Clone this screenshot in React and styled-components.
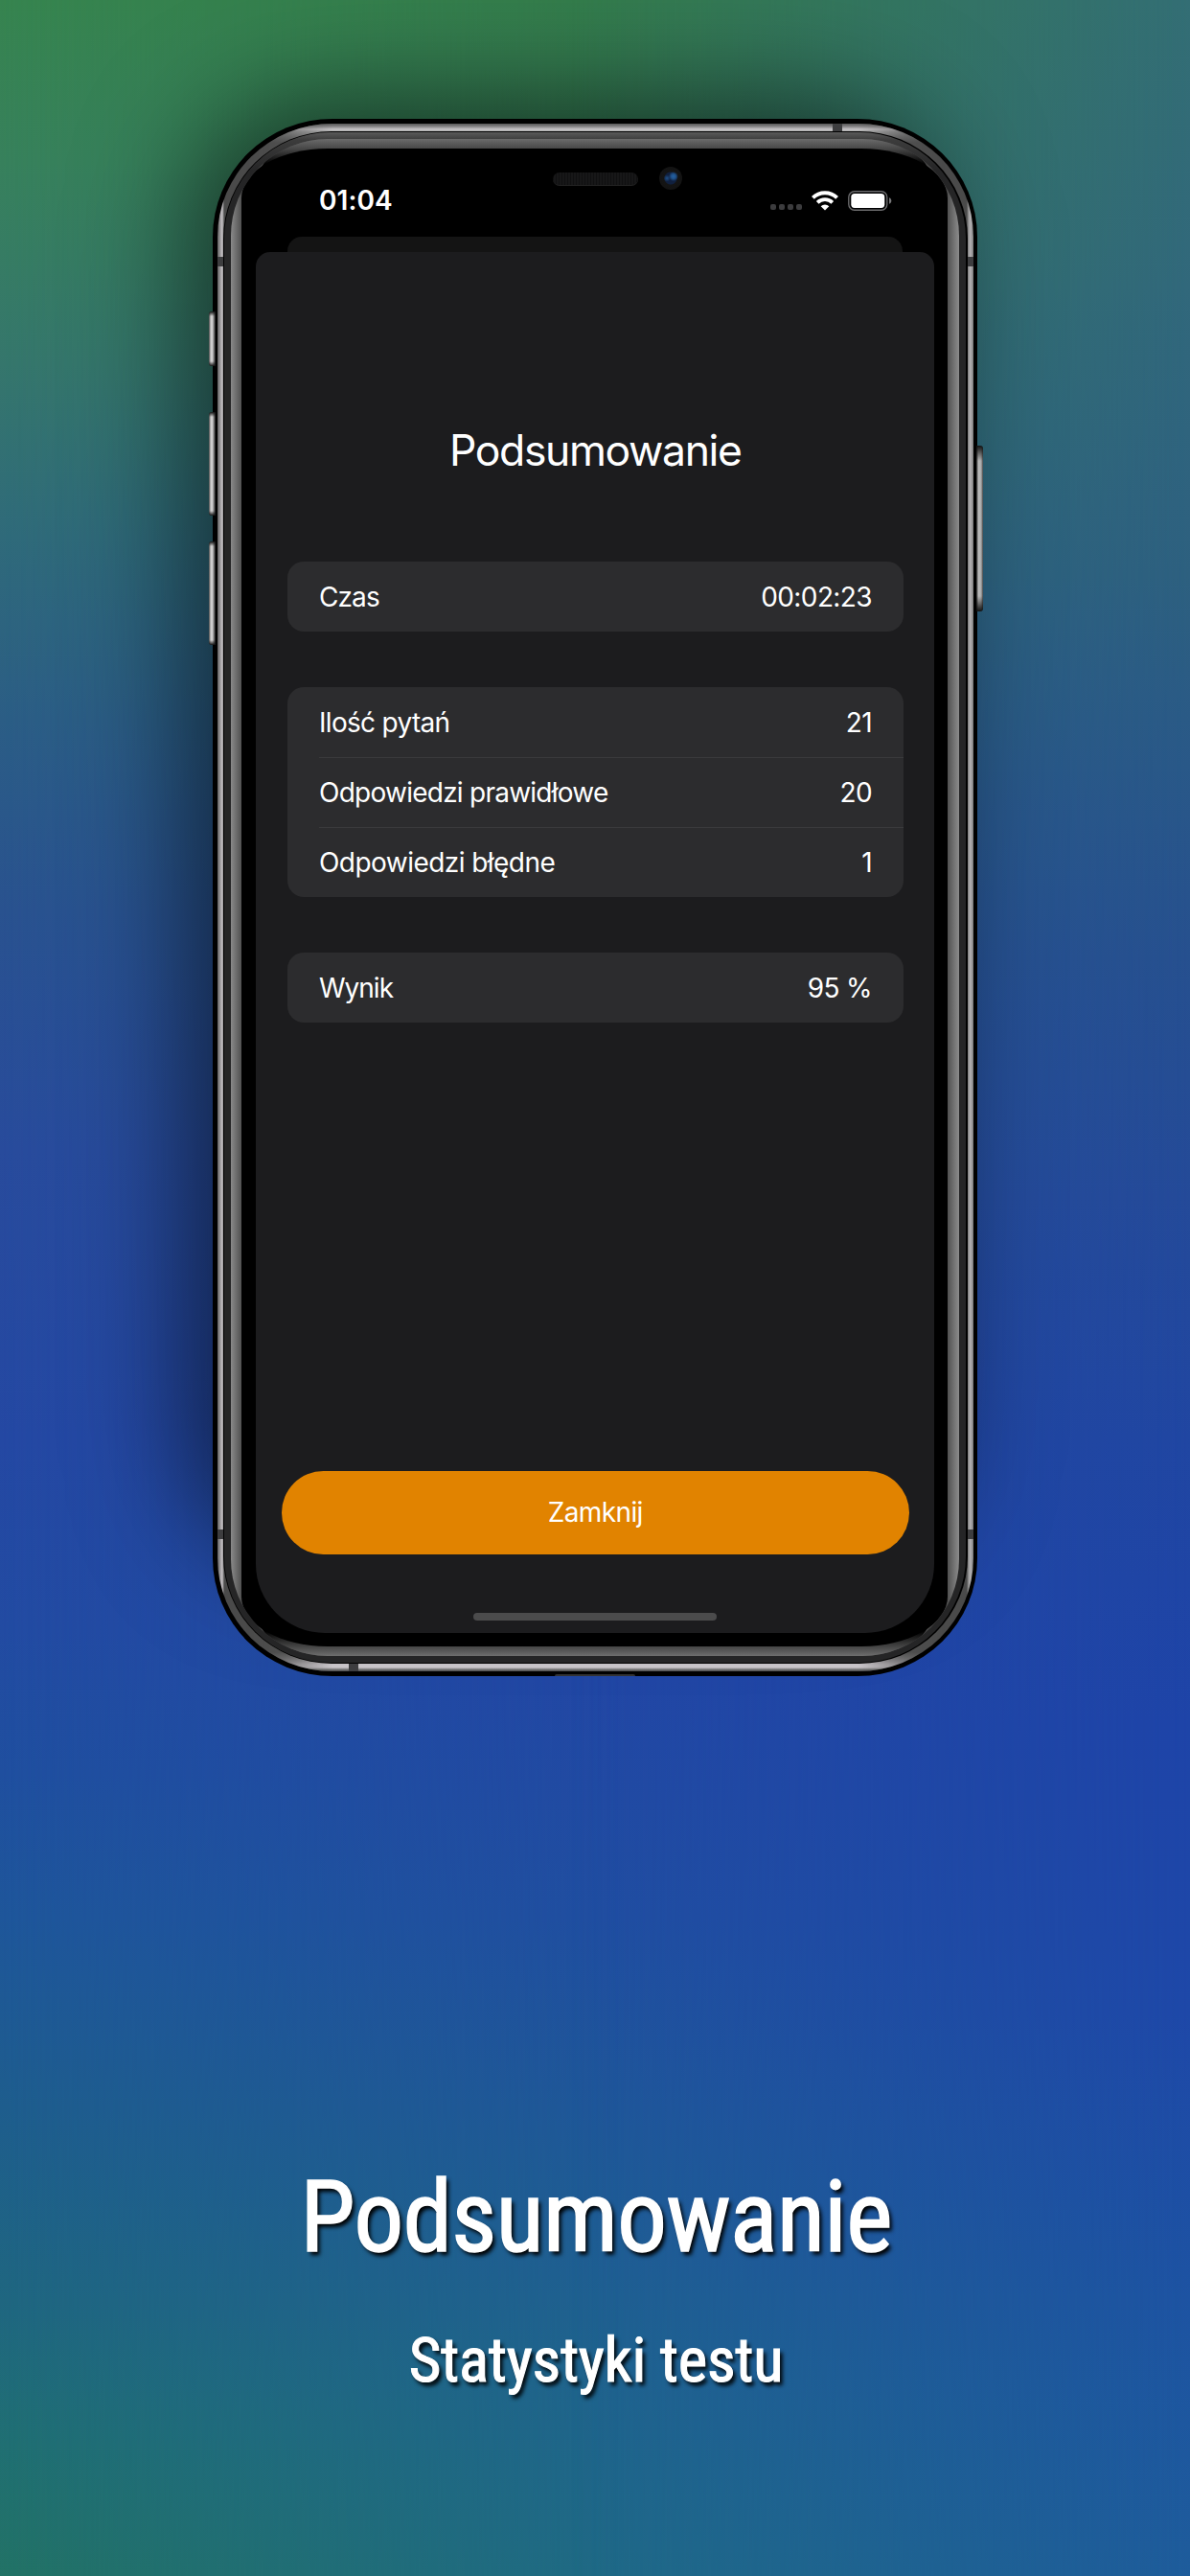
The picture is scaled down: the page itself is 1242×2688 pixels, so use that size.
import React from "react";
import styled, { createGlobalStyle } from "styled-components";

const GlobalStyle = createGlobalStyle`
  html, body { margin: 0; padding: 0; }
  *, *::before, *::after { box-sizing: border-box; }
`;

const Poster = styled.main`
  position: relative;
  isolation: isolate;
  display: flex;
  flex-direction: column;
  align-items: center;
  width: 1242px;
  height: 2688px;
  padding-top: 124px;
  overflow: hidden;
  color: #fff;
  font-family: Inter, "Liberation Sans", sans-serif;
  background: linear-gradient(
    180deg,
    #347d4c 0px, #35795a 250px, #31706c 450px, #2c627c 650px, #28568a 850px,
    #264e96 1100px, #2448a0 1400px, #2247a5 1750px, #204ea1 2000px,
    #1f5799 2200px, #1f6190 2420px, #1f6a86 2688px
  );
`;

const SideWash = styled.div`
  position: absolute;
  z-index: -2;
  inset: 0;
  background: ${(p) => p.$tones};
  mask-image: linear-gradient(${(p) => p.$to}, #000 0%, transparent 52%);
`;

const leftTones =
  "linear-gradient(180deg, #36844f 0px, #37815c 170px, #35766c 380px, #2f6a7a 560px, #2b5d85 750px, #29528f 950px, #284b9c 1200px, #2448a3 1500px, #224ba2 1700px, #1f4f9f 1850px, #1e569a 2000px, #1e5d8d 2200px, #1f6680 2400px, #206f72 2550px, #227265 2688px)";
const rightTones =
  "linear-gradient(180deg, #336e74 0px, #31687b 300px, #2d6080 600px, #295888 800px, #26508f 1000px, #244a99 1250px, #2046a2 1500px, #1e44a8 1800px, #1e48a8 2100px, #1d53a2 2400px, #1e5c9b 2688px)";

const PhoneWrap = styled.section`
  position: relative;
  width: 798px;
  height: 1625px;
  margin-right: 1px;
  &::before {
    content: "";
    position: absolute;
    z-index: -1;
    left: 5px;
    right: 45px;
    top: 5px;
    bottom: 130px;
    border-radius: 120px;
    box-shadow: -14px -6px 115px 18px rgba(0, 0, 0, 0.56);
  }
`;

const SideKey = styled.i`
  position: absolute;
  width: 7px;
  top: ${(p) => p.$top}px;
  height: ${(p) => p.$height}px;
  ${(p) => (p.$right ? "right: -6px;" : "left: -4px;")}
  border-radius: ${(p) => (p.$right ? "0 3px 3px 0" : "3px 0 0 3px")};
  background:
    linear-gradient(180deg, #111 0, transparent ${(p) => (p.$right ? 16 : 5)}px, transparent calc(100% - ${(p) => (p.$right ? 16 : 5)}px), #111 100%),
    ${(p) =>
      p.$right
        ? "linear-gradient(90deg, #111 0, #777 1px, #bbb 2.5px, #aaa 5px, #444 7px)"
        : "linear-gradient(90deg, #444 0, #aaa 1.5px, #e0e0e0 3px, #bbb 4px, #555 6px, #000 7px)"};
`;

const Shell = styled.div`
  height: 100%;
  padding: 4.5px 4px 5px 5px;
  border-radius: 125px / 123px;
  background: #000;
`;

const MetalBand = styled.div`
  position: relative;
  height: 100%;
  padding: 8px 6px;
  border-radius: 120px / 118px;
  overflow: hidden;
  background: linear-gradient(90deg, #5c5c5c 0, #8b898b 2px, #c6c2c6 5px, #4a4a4a 7px, #4a4a4a calc(100% - 7px), #999 calc(100% - 5px), #b4b2b4 calc(100% - 3px), #777 100%);
  &::before {
    content: "";
    position: absolute;
    inset: 0;
    background: linear-gradient(180deg, #555 0, #858385 3px, #c8c5c8 6px, #aaa 8px, #555 20px, #555 calc(100% - 20px), #c8c4c8 calc(100% - 7px), #c8c4c8 calc(100% - 4px), #777 calc(100% - 2px), #4a4a4a 100%);
    mask-image: linear-gradient(90deg, transparent 30px, #000 120px, #000 calc(100% - 120px), transparent calc(100% - 30px));
  }
`;

const Antenna = styled.i`
  position: absolute;
  background: #3d3d3f;
  width: ${(p) => (p.$flat ? 10 : 6)}px;
  height: ${(p) => (p.$flat ? 8 : 10)}px;
  ${(p) => p.$side}: 0;
  ${(p) => (p.$flat ? "left" : "top")}: ${(p) => p.$at}px;
`;

const Gasket = styled.div`
  position: relative;
  height: 100%;
  padding: 1.5px;
  border-radius: 113px / 112px;
  background: #000;
`;

const Chassis = styled.div`
  height: 100%;
  padding: 7px;
  border-radius: 111px;
  background: linear-gradient(180deg, #5a5a5a 0, #3c3c3c 8px, #252526 40px, #252526 100%);
`;

const Bevel = styled.div`
  height: 100%;
  padding: 0 12px 0 11px;
  overflow: hidden;
  border-radius: 101px;
  background: linear-gradient(90deg, #8a8a8a 0, #6f6f6f 5px, #505050 11px, #484848 30px, #484848 calc(100% - 30px), #505050 calc(100% - 12px), #6f6f6f calc(100% - 6px), #8c8c8c 100%);
`;

const BevelEdge = styled.div`
  height: 100%;
  padding: 10px 0;
  border-radius: 65px / 110px;
  background: linear-gradient(180deg, #6b6b6b 0, #484848 10px, #000 26px, #000 calc(100% - 26px), #444 calc(100% - 10px), #6e6e6e 100%);
`;

const Glass = styled.div`
  position: relative;
  height: 100%;
  padding: 0 14px 14px 14.5px;
  border-radius: 90px / 52px;
  background: #000;
`;

const Screen = styled.div`
  display: flex;
  flex-direction: column;
  height: 100%;
  border-radius: 0 0 72px 72px;
  overflow: hidden;
`;

const Earpiece = styled.i`
  position: absolute;
  left: 325px;
  top: 25px;
  width: 89px;
  height: 14px;
  border-radius: 7px;
  border-bottom: 1px solid #222;
  background:
    repeating-linear-gradient(90deg, rgba(0, 0, 0, 0.3) 0 1px, transparent 1px 3px),
    #171718;
`;

const Camera = styled.i`
  position: absolute;
  left: 436px;
  top: 19px;
  width: 24px;
  height: 24px;
  border-radius: 50%;
  background:
    radial-gradient(circle at 62% 42%, #2461a3 0, #1f5088 2.5px, transparent 5px),
    radial-gradient(circle at 34% 50%, #1f5088 0, transparent 3.5px),
    radial-gradient(circle, #10203f 0, #10203f 6px, #141414 7px, #131313 12px);
`;

const StatusBar = styled.header`
  display: flex;
  justify-content: space-between;
  flex: none;
  height: 91.5px;
  padding: 37px 44px 0 66.5px;
`;

const Clock = styled.time`
  font-size: 28px;
  line-height: 34px;
  font-weight: 600;
  letter-spacing: 0.1px;
`;

const Indicators = styled.div`
  display: flex;
  align-items: flex-start;
  padding-top: 6.5px;
`;

const SignalDots = styled.div`
  display: flex;
  gap: 3px;
  margin: 14.5px 10px 0 0;
`;

const Dot = styled.i`
  width: 6px;
  height: 6px;
  border-radius: 2px;
  background: #3c3c3e;
`;

const WifiGlyph = styled.svg`
  width: 28px;
  height: 21px;
  margin-right: 10.5px;
`;

const BatteryGlyph = styled.svg`
  width: 46px;
  height: 21px;
`;

const BackCard = styled.div`
  flex: none;
  height: 16.5px;
  margin: 0 33px;
  border-radius: 15px 15px 0 0;
  background: #141414;
`;

const Sheet = styled.div`
  display: flex;
  flex-direction: column;
  flex: 1;
  padding: 178px 26px 13px 27px;
  border-radius: 15px 15px 0 0;
  background: #1c1c1e;
`;

const SheetTitle = styled.h1`
  margin: 0 0 85.5px;
  font-size: 44.5px;
  line-height: 59px;
  font-weight: 400;
  letter-spacing: -1.4px;
  text-align: center;
`;

const Groups = styled.div`
  display: flex;
  flex-direction: column;
  gap: 58px;
  padding: 0 6.5px;
`;

const Group = styled.dl`
  margin: 0;
  border-radius: 17px;
  overflow: hidden;
  background: #2c2c2e;
`;

const Row = styled.div`
  display: flex;
  justify-content: space-between;
  align-items: center;
  height: 73px;
  margin-left: 33px;
  padding: 1px 32.5px 0 0;
  font-size: 28px;
  & + & { box-shadow: inset 0 1px 0 #3a3a3c; }
`;

const Label = styled.dt`
  letter-spacing: ${(p) => p.$tracking}px;
`;

const Value = styled.dd`
  margin: 0;
  letter-spacing: -0.6px;
`;

const CloseButton = styled.button`
  margin-top: auto;
  height: 87px;
  border: 0;
  border-radius: 44px;
  background: #e18300;
  color: #fff;
  font: 400 28px/34px Inter, "Liberation Sans", sans-serif;
  letter-spacing: -0.6px;
`;

const HomeIndicator = styled.div`
  align-self: center;
  width: 254px;
  height: 8px;
  margin-top: 61px;
  border-radius: 4px;
  background: #4b4b4c;
`;

const Foot = styled.i`
  position: absolute;
  left: 357px;
  bottom: 0;
  width: 84px;
  height: 2px;
  border-radius: 2px 2px 0 0;
  background: #333;
`;

const Caption = styled.footer`
  display: flex;
  flex-direction: column;
  align-items: center;
  gap: 50px;
  margin: 504px 0 0 2px;
  font-family: "Roboto Condensed", Roboto, sans-serif;
  text-shadow: 3px 4px 4px #000;
`;

const Headline = styled.h2`
  margin: 0;
  font-size: 104px;
  line-height: 122px;
  font-weight: 400;
  letter-spacing: -1px;
  -webkit-text-stroke: 1.4px #fff;
`;

const Subline = styled.p`
  margin: 0;
  font-size: 65px;
  line-height: 77px;
  font-weight: 400;
  letter-spacing: -0.3px;
  -webkit-text-stroke: 1.1px #fff;
`;

const groups = [
  [{ label: "Czas", value: "00:02:23", tracking: -0.9 }],
  [
    { label: "Ilość pytań", value: "21", tracking: -0.7 },
    { label: "Odpowiedzi prawidłowe", value: "20", tracking: -0.75 },
    { label: "Odpowiedzi błędne", value: "1", tracking: -0.55 },
  ],
  [{ label: "Wynik", value: "95 %", tracking: -1 }],
];

function Wifi() {
  return (
    <WifiGlyph viewBox="0 0 28 21" fill="none" stroke="#fff">
      <path d="M1.4 7.4a17.9 17.9 0 0 1 25.2 0" strokeWidth="4" />
      <path d="M6.2 12.4a11.1 11.1 0 0 1 15.6 0" strokeWidth="3.8" />
      <path d="M14 20.6l-4.3-4.4a6.2 6.2 0 0 1 8.6 0z" fill="#fff" stroke="none" />
    </WifiGlyph>
  );
}

function Battery() {
  return (
    <BatteryGlyph viewBox="0 0 46 21">
      <rect x="0.8" y="0.8" width="40" height="19.4" rx="6" fill="none" stroke="#6b6b6d" strokeWidth="1.4" />
      <rect x="3.3" y="3.1" width="35" height="14.8" rx="3.6" fill="#fff" />
      <path d="M43 7.3c1.6.5 2.3 1.7 2.3 3.2s-.7 2.7-2.3 3.2z" fill="#777779" />
    </BatteryGlyph>
  );
}

export default function App() {
  return (
    <Poster>
      <GlobalStyle />
      <SideWash $tones={leftTones} $to="90deg" />
      <SideWash $tones={rightTones} $to="270deg" />
      <PhoneWrap>
        <Shell>
          <MetalBand>
            <Antenna $side="left" $at={139} />
            <Antenna $side="right" $at={139} />
            <Antenna $side="left" $at={1467} />
            <Antenna $side="right" $at={1467} />
            <Antenna $flat $side="top" $at={642} />
            <Antenna $flat $side="bottom" $at={137} />
            <Gasket>
              <Chassis>
                <Bevel>
                  <BevelEdge>
                    <Glass>
                      <Earpiece />
                      <Camera />
                      <Screen>
                        <StatusBar>
                          <Clock>01:04</Clock>
                          <Indicators>
                            <SignalDots>
                              <Dot /><Dot /><Dot /><Dot />
                            </SignalDots>
                            <Wifi />
                            <Battery />
                          </Indicators>
                        </StatusBar>
                        <BackCard />
                        <Sheet>
                          <SheetTitle>Podsumowanie</SheetTitle>
                          <Groups>
                            {groups.map((rows) => (
                              <Group key={rows[0].label}>
                                {rows.map((r) => (
                                  <Row key={r.label}>
                                    <Label $tracking={r.tracking}>{r.label}</Label>
                                    <Value>{r.value}</Value>
                                  </Row>
                                ))}
                              </Group>
                            ))}
                          </Groups>
                          <CloseButton>Zamknij</CloseButton>
                          <HomeIndicator />
                        </Sheet>
                      </Screen>
                    </Glass>
                  </BevelEdge>
                </Bevel>
              </Chassis>
            </Gasket>
          </MetalBand>
        </Shell>
        <SideKey $top={201} $height={57} />
        <SideKey $top={306} $height={108} />
        <SideKey $top={441} $height={108} />
        <SideKey $right $top={341} $height={173} />
        <Foot />
      </PhoneWrap>
      <Caption>
        <Headline>Podsumowanie</Headline>
        <Subline>Statystyki testu</Subline>
      </Caption>
    </Poster>
  );
}
